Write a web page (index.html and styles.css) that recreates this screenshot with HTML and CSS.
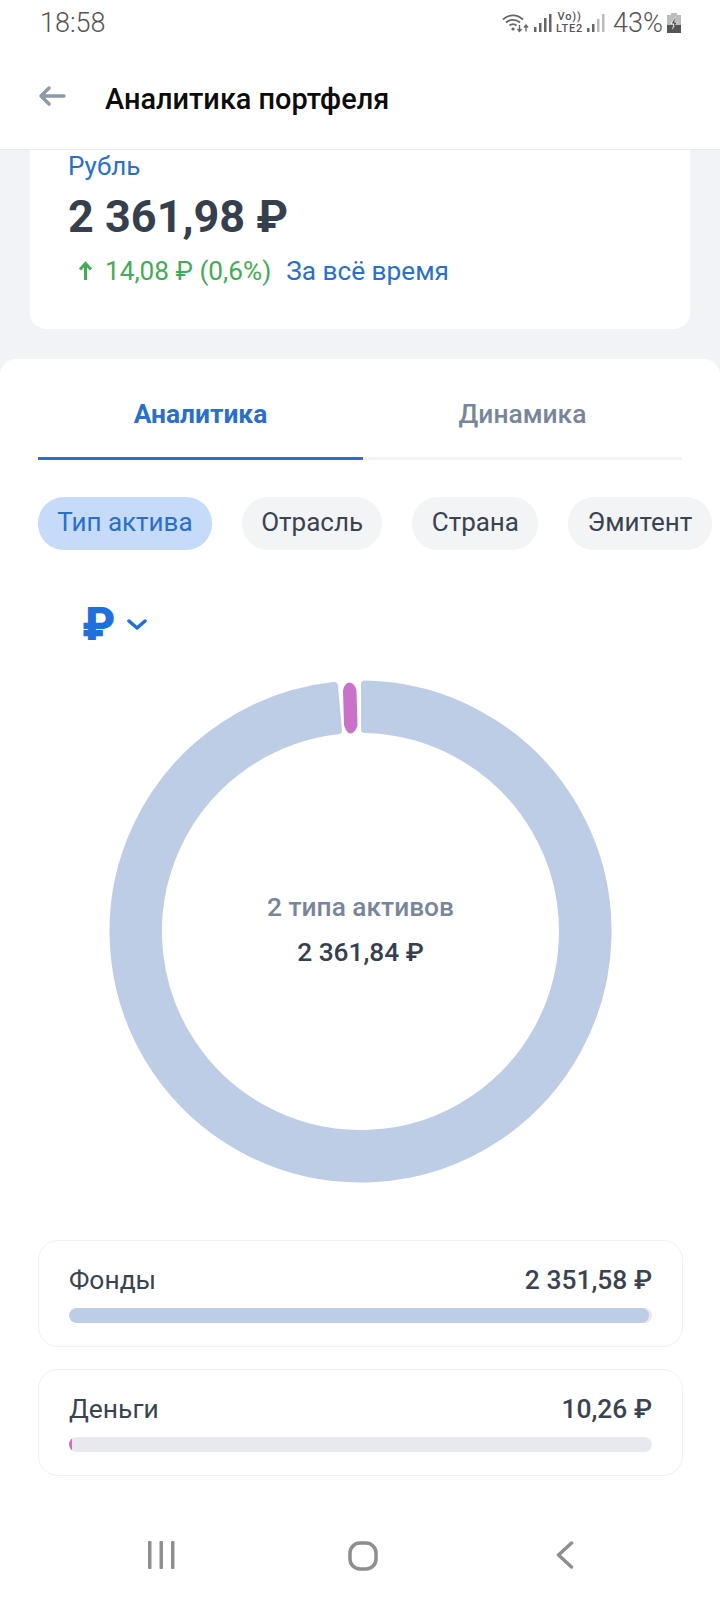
FILE: index.html
```html
<!DOCTYPE html>
<html lang="ru">
<head>
  <meta charset="UTF-8">
  <title>Аналитика портфеля</title>
  <link rel="stylesheet" href="styles.css">
</head>
<body>
<div class="page">
  <div class="status">
    <span class="time">18:58</span>
    <div class="status-icons">
      <svg class="wifi" width="27" height="20" viewBox="0 0 27 20" fill="none" stroke="#666">
        <path d="M1 6.500C7 1 15 1 21 6.500" stroke-width="1.800"/>
        <path d="M4 9.500C8 6 14 6 18 9.500" stroke-width="1.800"/>
        <path d="M7.500 12.500C9.500 11 12.500 11 14.500 12.500" stroke-width="1.800"/>
        <circle cx="11" cy="16" r="1.600" fill="#666" stroke="none"/>
        <path d="M17.500 12v6M15.500 16l2 2.500 2-2.500M24 18.500v-6M22 14.500l2-2.500 2 2.500" stroke-width="1.400"/>
      </svg>
      <svg width="18" height="20" viewBox="0 0 18 20" fill="#666">
        <rect x="0" y="14" width="2.500" height="5"/><rect x="5" y="10" width="2.500" height="9"/>
        <rect x="10" y="5" width="2.500" height="14"/><rect x="15" y="1" width="2.500" height="18"/>
      </svg>
      <div class="volte"><span>Vo))</span><span>LTE2</span></div>
      <svg width="18" height="20" viewBox="0 0 18 20" fill="#666">
        <rect x="0" y="15" width="2.500" height="4"/><rect x="5" y="11" width="2.500" height="8"/>
        <rect x="10" y="6" width="2.500" height="13" fill="#bbb"/><rect x="15" y="1" width="2.500" height="18" fill="#bbb"/>
      </svg>
      <span class="percent">43%</span>
      <svg width="14" height="20" viewBox="0 0 14 20">
        <path d="M4 0h6v2h4v18H0V2h4z" fill="#bdbdbd"/>
        <path d="M0 12h14v8H0z" fill="#555"/>
        <path d="M8.500 3L3.500 11h3l-1.500 6 5.500-8h-3z" fill="#fff"/>
        <path d="M8 4.500L4.800 10.400h2.600l-1 4.600 3.300-5.400h-2.500z" fill="#444"/>
      </svg>
    </div>
  </div>

  <header class="topbar">
    <svg class="back" width="28" height="22" viewBox="0 0 28 22" fill="none" stroke="#8c99ab" stroke-width="3.500" stroke-linecap="round" stroke-linejoin="round">
      <path d="M26 11H3M11 3l-8 8 8 8"/>
    </svg>
    <h1>Аналитика портфеля</h1>
  </header>

  <main class="content">
    <section class="summary">
      <div class="currency-name">Рубль</div>
      <div class="total">2 361,98 ₽</div>
      <div class="profit">
        <svg width="15" height="20" viewBox="0 0 15 20" fill="none" stroke="#44ab55" stroke-width="3">
          <path d="M7.500 19V3M2 8.500l5.500-6 5.500 6"/>
        </svg>
        <span class="profit-value">14,08 ₽ (0,6%)</span>
        <span class="profit-period">За всё время</span>
      </div>
    </section>

    <section class="panel">
      <div class="tabs">
        <div class="tab tab-active">Аналитика</div>
        <div class="tab">Динамика</div>
      </div>

      <div class="chips">
        <div class="chip chip-active">Тип актива</div>
        <div class="chip">Отрасль</div>
        <div class="chip">Страна</div>
        <div class="chip">Эмитент</div>
      </div>

      <div class="currency">
        <span class="currency-sign">₽</span>
        <svg width="20" height="11" viewBox="0 0 20 11" fill="none" stroke="#1f6fdc" stroke-width="3.500" stroke-linecap="round" stroke-linejoin="round">
          <path d="M2 2l8 7 8-7"/>
        </svg>
      </div>

      <div class="donut">
        <svg width="503" height="503" viewBox="-251.500 -251.500 503 503">
          <path d="M4.500 -246.960A247 247 0 1 1 -26.500 -245.570L-22.500 -201.250A202.500 202.500 0 1 0 4.500 -202.450Z" fill="#bccde5" stroke="#bccde5" stroke-width="8" stroke-linejoin="round"/>
          <path d="M-11 -249C-8 -249 -4 -245 -4 -240L-3 -207C-3 -203 -7 -198 -10 -198C-13 -198 -16 -203 -16.500 -207L-17.500 -240C-17.500 -245 -14 -249 -11 -249Z" fill="#c873c8"/>
        </svg>
        <div class="donut-label">
          <div class="donut-title">2 типа активов</div>
          <div class="donut-sum">2 361,84 ₽</div>
        </div>
      </div>

      <div class="asset">
        <div class="asset-row"><span>Фонды</span><span class="asset-sum">2 351,58 ₽</span></div>
        <div class="bar"><div class="bar-fill" style="width: 99.5%"></div></div>
      </div>
      <div class="asset">
        <div class="asset-row"><span>Деньги</span><span class="asset-sum">10,26 ₽</span></div>
        <div class="bar"><div class="bar-fill bar-fill-pink" style="width: 0.5%"></div></div>
      </div>

      <nav class="navbar">
        <svg width="27" height="28" viewBox="0 0 27 28" fill="#8e8e8e">
          <rect x="0" y="0" width="3.500" height="28" rx="1"/><rect x="11.500" y="0" width="3.500" height="28" rx="1"/><rect x="23" y="0" width="3.500" height="28" rx="1"/>
        </svg>
        <svg width="30" height="30" viewBox="0 0 30 30" fill="none" stroke="#8e8e8e" stroke-width="3.500">
          <rect x="2" y="2" width="26" height="26" rx="10"/>
        </svg>
        <svg width="18" height="28" viewBox="0 0 18 28" fill="none" stroke="#8e8e8e" stroke-width="3.500" stroke-linecap="round" stroke-linejoin="round">
          <path d="M15.500 2L2.500 14l13 12"/>
        </svg>
      </nav>
    </section>
  </main>
</div>
</body>
</html>
```

FILE: styles.css
```css
* {
  margin: 0;
  padding: 0;
  box-sizing: border-box;
}

body {
  font-family: Roboto, "Liberation Sans", sans-serif;
  background: #fff;
}

.page {
  width: 720px;
  height: 1600px;
  overflow: hidden;
  display: flex;
  flex-direction: column;
}

/* status bar */
.status {
  height: 46px;
  padding: 0 39px 0 40px;
  display: flex;
  justify-content: space-between;
  align-items: center;
  color: #555;
}

.time {
  font-size: 27px;
  font-weight: 300;
}

.status-icons {
  display: flex;
  align-items: center;
  gap: 4px;
}

.volte {
  display: flex;
  flex-direction: column;
  font-size: 11px;
  font-weight: 500;
  line-height: 12px;
  letter-spacing: 0.8px;
  align-items: center;
  color: #555;
}

.wifi {
  margin-right: 1px;
}

.percent {
  font-size: 27px;
  font-weight: 300;
  margin-left: 4px;
}

/* header */
.topbar {
  height: 104px;
  padding-left: 38px;
  display: flex;
  align-items: center;
  border-bottom: 1px solid #e8eaee;
}

.topbar h1 {
  font-size: 28.900px;
  font-weight: 500;
  color: #0c0c0c;
  margin: 3px 0 0 39px;
}

.back {
  margin-top: -4px;
}

.content {
  flex: 1;
  background: #f1f3f6;
  display: flex;
  flex-direction: column;
}

/* card with the total */
.summary {
  height: 179px;
  margin: 0 30px;
  padding: 0 38px;
  background: #fff;
  border-radius: 0 0 16px 16px;
}

.currency-name {
  font-size: 26px;
  line-height: 30px;
  color: #2a6fc9;
  margin-top: 1px;
}

.total {
  font-size: 45px;
  font-weight: 700;
  line-height: 52px;
  color: #363f4e;
  margin-top: 10px;
}

.profit {
  display: flex;
  align-items: center;
  font-size: 26.200px;
  line-height: 30px;
  margin: 13px 0 0 10px;
}

.profit-value {
  color: #44ab55;
  margin-left: 12px;
}

.profit-period {
  color: #2a6fc9;
  margin-left: 15px;
}

/* lower panel */
.panel {
  flex: 1;
  margin-top: 30px;
  padding: 0 38px;
  background: #fff;
  border-radius: 16px 16px 0 0;
}

.tabs {
  display: flex;
}

.tab {
  width: 320px;
  height: 101px;
  padding-top: 39px;
  text-align: center;
  font-size: 26.400px;
  line-height: 32px;
  font-weight: 500;
  color: #78859a;
  border-bottom: 3px solid #f1f3f6;
}

.tab-active {
  width: 326px;
  color: #2a6fc9;
  font-weight: 700;
  border-bottom-color: #2a6fc9;
}

.chips {
  display: flex;
  gap: 30px;
  margin-top: 37px;
  width: 700px;
}

.chip {
  height: 53px;
  padding: 0 19.300px;
  border-radius: 26px;
  background: #f3f4f6;
  color: #3a4351;
  font-size: 26px;
  line-height: 51px;
  white-space: nowrap;
}

.chip-active {
  background: #c5dbf9;
  color: #2a6fc9;
}

.currency {
  display: flex;
  align-items: center;
  height: 44px;
  margin-top: 52px;
  padding-left: 44px;
  gap: 12px;
}

.currency-sign {
  font-size: 46px;
  font-weight: 900;
  line-height: 44px;
  color: #1f6fdc;
}

/* donut */
.donut {
  position: relative;
  width: 503px;
  height: 503px;
  margin: 34px 0 0 71px;
}

.donut svg {
  display: block;
}

.donut-label {
  position: absolute;
  top: 212px;
  left: 0;
  right: 0;
  text-align: center;
}

.donut-title {
  font-size: 26.300px;
  font-weight: 500;
  line-height: 30px;
  color: #78859a;
}

.donut-sum {
  font-size: 26.300px;
  font-weight: 500;
  line-height: 30px;
  color: #363f4e;
  margin-top: 15px;
}

/* asset rows */
.asset {
  width: 645px;
  height: 107px;
  margin-top: 22px;
  padding: 0 30px;
  border: 1px solid #f0f1f4;
  border-radius: 20px;
}

.donut + .asset {
  margin-top: 57px;
}

.asset-row {
  display: flex;
  justify-content: space-between;
  height: 67px;
  padding-top: 24px;
  font-size: 26.400px;
  line-height: 30px;
  color: #3a4351;
}

.asset-sum {
  font-weight: 500;
}

.bar {
  height: 15px;
  border-radius: 8px;
  background: #e7e9ee;
  overflow: hidden;
}

.bar-fill {
  height: 100%;
  border-radius: 8px;
  background: #bccde5;
}

.bar-fill-pink {
  background: #c873c8;
}

/* system navigation */
.navbar {
  display: flex;
  height: 30px;
  margin: 65px 0 0 -38px;
  width: 720px;
  position: relative;
}

.navbar svg {
  position: absolute;
  top: 0;
}

.navbar svg:nth-child(1) { left: 148px; }
.navbar svg:nth-child(2) { left: 348px; }
.navbar svg:nth-child(3) { left: 556px; }
```
